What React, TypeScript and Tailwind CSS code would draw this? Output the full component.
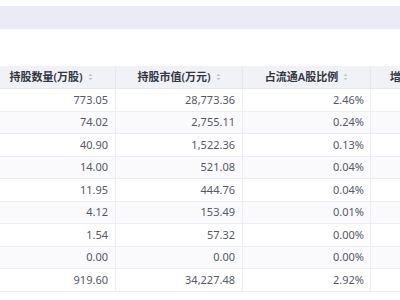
import type React from "react"

interface Row {
  shares: string
  value: string
  ratio: string
}

const rows: Row[] = [
  { shares: "773.05", value: "28,773.36", ratio: "2.46%" },
  { shares: "74.02", value: "2,755.11", ratio: "0.24%" },
  { shares: "40.90", value: "1,522.36", ratio: "0.13%" },
  { shares: "14.00", value: "521.08", ratio: "0.04%" },
  { shares: "11.95", value: "444.76", ratio: "0.04%" },
  { shares: "4.12", value: "153.49", ratio: "0.01%" },
  { shares: "1.54", value: "57.32", ratio: "0.00%" },
  { shares: "0.00", value: "0.00", ratio: "0.00%" },
  { shares: "919.60", value: "34,227.48", ratio: "2.92%" },
]

const SortIcon: React.FC = () => (
  <svg width="5" height="8" viewBox="0 0 5 8" className="ml-[5px] shrink-0">
    <path d="M2.5 0.5 L4.5 3 L0.5 3 Z" fill="#c4c6d0" />
    <path d="M2.5 7.5 L4.5 5 L0.5 5 Z" fill="#c4c6d0" />
  </svg>
)

const HeaderCell: React.FC<{ label: string; width: string; sort?: boolean }> = ({ label, width, sort = true }) => (
  <div className={`${width} shrink-0 flex items-center justify-center border-r border-[#e6e7f2] font-semibold text-[#333640]`}>
    <span>{label}</span>
    {sort && <SortIcon />}
  </div>
)

export default function App() {
  return (
    <div
      className="w-[400px] h-[300px] bg-white overflow-hidden text-[11px]"
      style={{ fontFamily: '"Noto Sans", "Noto Sans CJK SC", sans-serif' }}
    >
      <div className="h-[6px]" />
      <div className="h-[23px] bg-[#ebebf5]" />
      <div className="h-[37px]" />

      <div className="-ml-[13px] w-[520px]">
        <div className="flex h-[23px] bg-[#f1f1f8] border-b border-[#e6e7f2]">
          <HeaderCell label="持股数量(万股)" width="w-[129px]" />
          <HeaderCell label="持股市值(万元)" width="w-[127px]" />
          <HeaderCell label="占流通A股比例" width="w-[128px]" />
          <div className="flex-1 flex items-center pl-[19px] font-semibold text-[#333640]">增持/减持</div>
        </div>

        {rows.map((r, i) => (
          <div
            key={i}
            className={`flex h-[22.55px] border-b border-[#ededf6] text-[#555866] ${i % 2 === 1 ? "bg-[#fafafd]" : "bg-white"}`}
          >
            <div className="w-[129px] shrink-0 flex items-center justify-end pr-[7px] border-r border-[#ededf6]">{r.shares}</div>
            <div className="w-[127px] shrink-0 flex items-center justify-end pr-[7px] border-r border-[#ededf6]">{r.value}</div>
            <div className="w-[128px] shrink-0 flex items-center justify-end pr-[6px] border-r border-[#ededf6]">{r.ratio}</div>
            <div className="flex-1" />
          </div>
        ))}
      </div>
    </div>
  )
}
